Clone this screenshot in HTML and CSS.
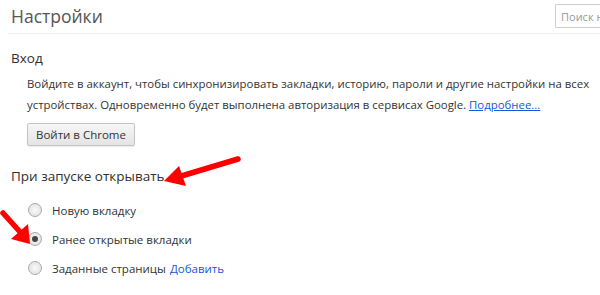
FILE: index.html
```html
<!DOCTYPE html>
<html lang="ru">
 <head>
  <meta charset="utf-8">
  <title>Настройки</title>
  <link rel="stylesheet" href="styles.css">
 </head>
 <body>
  <div class="header">
   <h1 class="title">Настройки</h1>
   <input class="search" type="text" placeholder="Поиск настроек">
  </div>

  <div class="section">
   <h3 class="sectiontitle">Вход</h3>
   <div class="sectionbody">
    <p class="text">Войдите в аккаунт, чтобы синхронизировать закладки, историю, пароли и другие настройки на всех<br>
    устройствах. Одновременно будет выполнена авторизация в сервисах Google. <a href="#">Подробнее...</a></p>
    <button class="btn">Войти в Chrome</button>
   </div>
  </div>

  <div class="section startup">
   <h3 class="sectiontitle">При запуске открывать</h3>
   <div class="radios">
    <label class="radio"><span class="dot"></span>Новую вкладку</label>
    <label class="radio"><span class="dot checked"></span>Ранее открытые вкладки</label>
    <label class="radio"><span class="dot"></span>Заданные страницы <a href="#" class="add">Добавить</a></label>
   </div>
  </div>

  <svg class="arrow arrow1" width="80" height="32" viewBox="0 0 80 32">
   <line x1="76" y1="4" x2="16" y2="22" stroke="#f00" stroke-width="5.5" stroke-linecap="round"/>
   <polygon points="2,26 17,11 24,31" fill="#f00"/>
  </svg>
  <svg class="arrow arrow2" width="36" height="38" viewBox="0 0 36 38">
   <line x1="3" y1="3" x2="21" y2="23" stroke="#f00" stroke-width="5.5" stroke-linecap="round"/>
   <polygon points="30,34 11,29 28,14" fill="#f00"/>
  </svg>
 </body>
</html>
```

FILE: styles.css
```css
body {
   margin: 0;
   padding: 0 0 0 11px;
   background: #fff;
   font-family: 'Open Sans', sans-serif;
   color: #333;
   position: relative;
   overflow: hidden;
}

.header {
   display: flex;
   justify-content: space-between;
   align-items: center;
   height: 33px;
   margin-left: -3px;
   padding-left: 3px;
   border-bottom: 1px solid #eee;
}

.title {
   margin: 0 0 2px 0;
   font-size: 17.5px;
   font-weight: normal;
   color: #555;
}

.search {
   box-sizing: border-box;
   width: 45px;
   height: 24px;
   margin: 0 0 1px 0;
   padding: 0 0 0 5px;
   border: 1px solid #cdcdcd;
   border-right: none;
   border-radius: 2px 0 0 2px;
   font-family: 'Open Sans', sans-serif;
   font-size: 11px;
}

.search::placeholder {
   color: #999;
}

.section {
   margin-top: 15px;
}

.startup {
   margin-top: 21px;
}

.sectiontitle {
   margin: 0;
   font-size: 13.5px;
   font-weight: normal;
   color: #303030;
}

.sectionbody {
   padding-left: 16px;
}

.text {
   margin: 6px 0 0 0;
   font-size: 11.4px;
   line-height: 21px;
   color: #333;
   white-space: nowrap;
}

.text a {
   color: #1558d6;
}

.btn {
   margin-top: 8px;
   width: 108px;
   height: 23px;
   padding: 0;
   border: 1px solid #c4c4c4;
   border-radius: 2px;
   background: linear-gradient(#f6f6f6, #e4e4e4);
   box-shadow: 0 1px 1px rgba(0,0,0,0.08);
   font-family: 'Open Sans', sans-serif;
   font-size: 11.5px;
   color: #333;
}

.radios {
   display: flex;
   flex-direction: column;
   gap: 11px;
   margin-top: 16px;
   padding-left: 17px;
}

.radio {
   display: flex;
   align-items: center;
   height: 18px;
   font-size: 11.5px;
   color: #333;
}

.dot {
   width: 14px;
   height: 14px;
   margin-right: 10px;
   border: 1px solid #aaa;
   border-radius: 50%;
   background: radial-gradient(#fafafa, #dcdcdc);
   box-sizing: border-box;
   display: flex;
   align-items: center;
   justify-content: center;
}

.dot.checked::after {
   content: "";
   width: 6px;
   height: 6px;
   border-radius: 50%;
   background: #444;
}

.add {
   margin-left: 4px;
   color: #1558d6;
   text-decoration: none;
}

.arrow {
   position: absolute;
}

.arrow1 {
   left: 162px;
   top: 155px;
}

.arrow2 {
   left: 0;
   top: 210px;
}
```
